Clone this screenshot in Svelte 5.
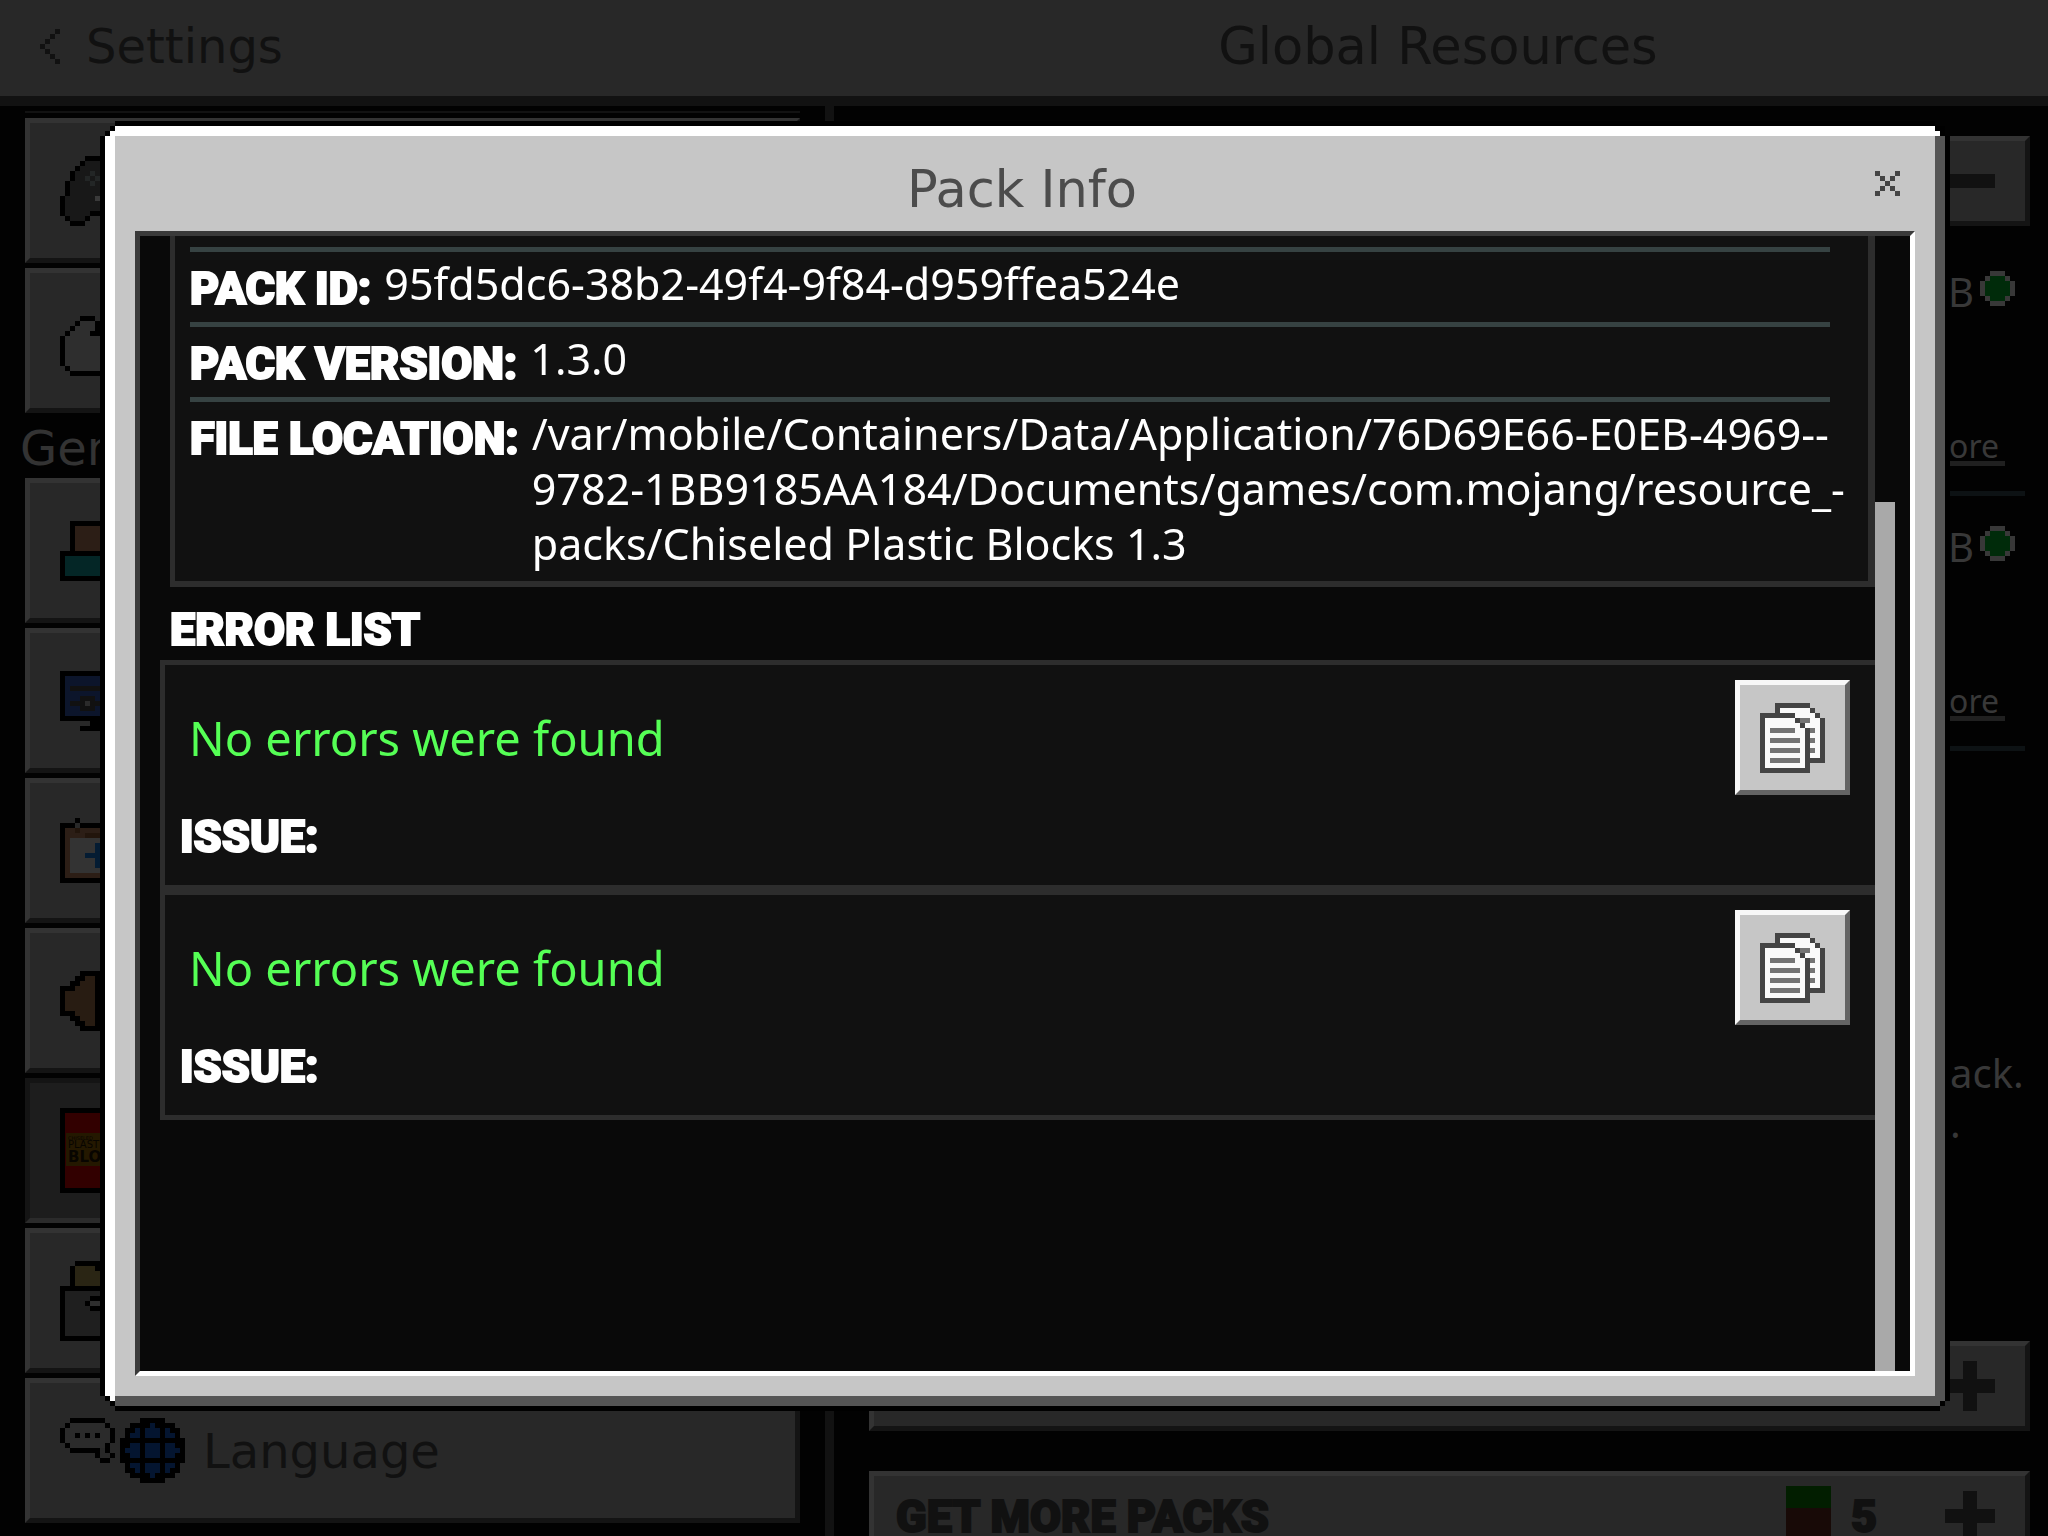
<script lang="ts">
	type Shape = { fill: string; d: string };
	type Icon = { width: number; height: number; shapes: Shape[] };

	// every icon is drawn on a grid of 5px cells
	const CELL = 5;

	const controller: Icon = {
		width: 8,
		height: 14,
		shapes: [
			{ fill: '#181818', d: 'M5 1h3v10h-2v1h-1v1h-3v-1h-1v-4h0v-3h1v-2h1v-1h1v-1h1z' },
			{ fill: '#000', d: 'M5 0h3v1h-3zM4 1h1v1h-1zM3 2h1v1h-1zM2 3h1v2h-1zM1 5h1v3h-1zM0 8h1v4h-1zM6 11h2v1h-2zM1 12h1v1h-1zM5 12h1v1h-1zM2 13h3v1h-3z' },
			{ fill: '#232626', d: 'M6 3h1v1h-1zM5 4h1v1h-1zM7 4h1v1h-1zM6 5h1v1h-1z' },
			{ fill: '#3a3a3a', d: 'M7 8h1v1h-1z' }
		]
	};

	const touch: Icon = {
		width: 8,
		height: 14,
		shapes: [
			{ fill: '#2e2e2e', d: 'M4 3h3v2h1v8h-6v-1h-1v-6h1v-1h1v-1h1z' },
			{ fill: '#000', d: 'M4 2h3v1h-3zM3 3h1v1h-1zM7 3h1v3h-2v-1h1zM2 4h1v1h-1zM1 5h1v1h-1zM0 6h1v6h-1zM1 12h1v1h-1zM2 13h6v1h-6z' }
		]
	};

	const profile: Icon = {
		width: 8,
		height: 12,
		shapes: [
			{ fill: '#000', d: 'M2 0h6v12h-8v-6h2z' },
			{ fill: '#2c1e16', d: 'M3 1h5v5h-5z' },
			{ fill: '#042626', d: 'M1 7h7v4h-7z' }
		]
	};

	const video: Icon = {
		width: 8,
		height: 12,
		shapes: [
			{ fill: '#000', d: 'M0 0h8v12h-4v-1h2v-1h-6z' },
			{ fill: '#0c152b', d: 'M1 1h7v8h-7z' },
			{ fill: '#111', d: 'M2 3h6v1h-6zM2 6h6v1h-6zM4 5h3v3h-3z' },
			{ fill: '#2b2b2b', d: 'M5 6h1v1h-1z' }
		]
	};

	const creator: Icon = {
		width: 8,
		height: 13,
		shapes: [
			{ fill: '#000', d: 'M3 0h1v1h4v12h-8v-12h3z' },
			{ fill: '#2c1e16', d: 'M1 2h7v10h-7z' },
			{ fill: '#282828', d: 'M0 0h3v1h-3zM3 1h1v1h-1z' },
			{ fill: '#22150c', d: 'M3 2h1v1h-1zM5 3h3v1h-3z' },
			{ fill: '#333', d: 'M2 4h6v7h-6z' },
			{ fill: '#041c33', d: 'M7 5h1v5h-1v-2h-2v-1h2z' }
		]
	};

	const audio: Icon = {
		width: 8,
		height: 12,
		shapes: [
			{ fill: '#000', d: 'M4 0h4v12h-4v-1h-1v-1h-1v-1h-2v-6h2v-1h1v-1h1z' },
			{ fill: '#281c12', d: 'M5 1h2v10h-2v-1h-1v-1h-1v-1h-2v-4h2v-1h1v-1h1z' }
		]
	};

	const storage: Icon = {
		width: 8,
		height: 16,
		shapes: [
			{ fill: '#000', d: 'M3 0h5v16h-8v-11h2v-4h1z' },
			{ fill: '#2a2514', d: 'M3 1h4v1h1v3h-5z' },
			{ fill: '#1f1f1f', d: 'M1 6h7v9h-7z' },
			{ fill: '#000', d: 'M6 7h2v1h-2zM5 8h1v1h-1zM6 9h2v1h-2z' },
			{ fill: '#2e2e2e', d: 'M6 8h2v1h-2z' }
		]
	};

	const language: Icon = {
		width: 25,
		height: 13,
		shapes: [
			{ fill: '#2b2b2b', d: 'M2 1h7v1h1v3h-1v1h-7v-1h-1v-3h1z' },
			{ fill: '#000', d: 'M2 0h7v1h-7zM1 1h1v1h-1zM9 1h1v1h-1zM0 2h1v3h-1zM10 2h1v3h-1zM1 5h1v1h-1zM9 5h1v2h-1zM2 6h6v2h-1v-1h-5zM10 7h1v1h-1zM8 8h2v1h-2zM3 3h1v1h-1zM5 3h1v1h-1zM7 3h1v1h-1z' },
			{ fill: '#000', d: 'M16 0h5v1h2v1h1v2h1v5h-1v2h-1v1h-2v1h-5v-1h-2v-1h-1v-2h-1v-5h1v-2h1v-1h2z' },
			{ fill: '#041530', d: 'M18 1h1v1h-1zM15 2h1v2h-2v-1h1zM17 2h3v2h-3zM21 2h1v1h1v1h-2zM14 5h2v3h-2v-1h-1v-1h1zM17 5h3v3h-3zM21 5h2v1h1v1h-1v1h-2zM14 9h2v2h-1v-1h-1zM17 9h3v2h-3zM21 9h2v1h-1v1h-1zM18 11h1v1h-1z' }
		]
	};

	const copy: Icon = {
		width: 13,
		height: 14,
		shapes: [
			{ fill: '#444', d: 'M3 0h7v1h1v1h1v1h1v9h-3v2h-10v-12h3z' },
			{ fill: '#fafafa', d: 'M4 1h6v1h1v1h1v8h-2v-7h-1v-1h-2v-1h-3zM1 3h6v1h1v1h1v8h-8z' },
			{ fill: '#444', d: 'M7 3h1v1h-1zM8 4h1v1h-1zM9 5h1v6h-1z' },
			{ fill: '#fafafa', d: 'M9 4h1v1h-1z' },
			{ fill: '#747474', d: 'M8 3h2v1h-2zM2 5h5v1h-5zM2 7h6v1h-6zM2 9h6v1h-6zM2 11h6v1h-6zM10 5h1v1h-1zM10 7h1v1h-1zM10 9h1v1h-1z' }
		]
	};

	const topItems = [
		{ id: 'controller', icon: controller },
		{ id: 'touch', icon: touch }
	];

	const generalItems = [
		{ id: 'profile', icon: profile },
		{ id: 'video', icon: video },
		{ id: 'creator', icon: creator },
		{ id: 'audio', icon: audio },
		{ id: 'resources', icon: null },
		{ id: 'storage', icon: storage }
	];

	const details = [
		{ label: 'PACK ID:', lines: ['95fd5dc6-38b2-49f4-9f84-d959ffea524e'] },
		{ label: 'PACK VERSION:', lines: ['1.3.0'] },
		{
			label: 'FILE LOCATION:',
			lines: [
				'/var/mobile/Containers/Data/Application/76D69E66-E0EB-4969--',
				'9782-1BB9185AA184/Documents/games/com.mojang/resource_-',
				'packs/Chiseled Plastic Blocks 1.3'
			]
		}
	];

	const errors = ['No errors were found', 'No errors were found'];

	let open = $state(true);
</script>

{#snippet pixelIcon(icon: Icon)}
	<svg
		width={icon.width * CELL}
		height={icon.height * CELL}
		viewBox="0 0 {icon.width} {icon.height}"
		shape-rendering="crispEdges"
		aria-hidden="true"
	>
		{#each icon.shapes as shape}
			<path fill={shape.fill} d={shape.d} />
		{/each}
	</svg>
{/snippet}

{#snippet plusIcon()}
	<svg width="50" height="50" viewBox="0 0 50 50" aria-hidden="true">
		<path fill="#111" d="M18 0h14v18h18v14h-18v18h-14v-18h-18v-14h18z" />
	</svg>
{/snippet}

<div class="screen">
	<header class="topbar">
		<button class="back">
			<svg width="20" height="35" viewBox="0 0 4 7" preserveAspectRatio="none" shape-rendering="crispEdges" aria-hidden="true">
				<path fill="#111" d="M3 0h1v1h-1zM2 1h1v1h-1zM1 2h1v1h-1zM0 3h1v1h-1zM1 4h1v1h-1zM2 5h1v1h-1zM3 6h1v1h-1z" />
			</svg>
			Settings
		</button>
		<h1>Global Resources</h1>
	</header>

	<div class="body">
		<nav class="sidebar">
			<div class="stub"></div>
			{#each topItems as item (item.id)}
				<button class="tile" aria-label={item.id}>{@render pixelIcon(item.icon)}</button>
			{/each}
			<h2>General</h2>
			{#each generalItems as item (item.id)}
				<button class="tile" class:selected={!item.icon} aria-label={item.id}>
					{#if item.icon}
						{@render pixelIcon(item.icon)}
					{:else}
						<svg class="pack-art" width="85" height="85" viewBox="0 0 85 85">
							<rect width="85" height="85" fill="#000" />
							<rect x="5" y="5" width="75" height="75" fill="#320000" />
							<rect x="6" y="25" width="73" height="33" fill="#241800" />
							<text x="8" y="32" font-size="5">CHISELED</text>
							<text x="8" y="40" font-size="10">PLASTIC</text>
							<text x="8" y="54" font-size="15" font-weight="bold">BLOCKS</text>
						</svg>
					{/if}
				</button>
			{/each}
			<button class="tile">
				{@render pixelIcon(language)}
				Language
			</button>
		</nav>

		<div class="divider"></div>

		<main class="content">
			<button class="fold" aria-label="Active">
				<svg width="50" height="50" viewBox="0 0 50 50" aria-hidden="true">
					<path fill="#111" d="M0 18h50v14h-50z" />
				</svg>
			</button>
			{#each [1, 2] as entry (entry)}
				<section class="entry">
					<div class="memory">
						<span>B</span>
						<svg width="35" height="35" viewBox="0 0 7 7" shape-rendering="crispEdges" aria-hidden="true">
							<path fill="#383838" d="M2 0h3v1h1v1h1v3h-1v1h-1v1h-3v-1h-1v-1h-1v-3h1v-1h1z" />
							<path fill="#002b0a" d="M2 1h3v1h1v3h-1v1h-3v-1h-1v-3h1z" />
						</svg>
					</div>
					<a href="#more">ore</a>
				</section>
			{/each}
			<p>ack.<br />.</p>
			<button class="fold" aria-label="Available">{@render plusIcon()}</button>
			<button class="fold">
				<span class="name">GET MORE PACKS</span>
				<svg width="45" height="60" viewBox="0 0 45 60" aria-hidden="true">
					<rect width="45" height="60" fill="#180a07" />
					<rect width="45" height="22" fill="#021e00" />
				</svg>
				<span class="count">5</span>
				{@render plusIcon()}
			</button>
		</main>
	</div>
</div>

{#if open}
	<div class="overlay">
		<div class="frame" role="dialog" aria-labelledby="dialog-title">
			<div class="window">
				<div class="titlebar">
					<h2 id="dialog-title">Pack Info</h2>
					<button class="close" aria-label="Close" onclick={() => (open = false)}>
						<svg width="25" height="25" viewBox="0 0 5 5" shape-rendering="crispEdges" aria-hidden="true">
							<path fill="#444" d="M0 0h1v1h-1zM4 0h1v1h-1zM1 1h1v1h-1zM3 1h1v1h-1zM2 2h1v1h-1zM1 3h1v1h-1zM3 3h1v1h-1zM0 4h1v1h-1zM4 4h1v1h-1z" />
						</svg>
					</button>
				</div>

				<div class="panel">
					<div class="scroll">
						<dl class="details">
							{#each details as row (row.label)}
								<div class="detail">
									<dt>{row.label}</dt>
									<dd>
										{#each row.lines as line}
											<div>{line}</div>
										{/each}
									</dd>
								</div>
							{/each}
						</dl>

						<h3>ERROR LIST</h3>
						<ul>
							{#each errors as message}
								<li>
									<div class="result">
										<span>{message}</span>
										<button class="copy" aria-label="Copy">{@render pixelIcon(copy)}</button>
									</div>
									<h4>ISSUE:</h4>
								</li>
							{/each}
						</ul>
					</div>
					<div class="track">
						<div class="thumb"></div>
					</div>
				</div>
			</div>
		</div>
	</div>
{/if}

<style>
	:global(body) {
		background: #020202;
		overflow: hidden;
	}

	h1,
	h2,
	h3,
	h4,
	p,
	dl,
	dd,
	ul {
		margin: 0;
		padding: 0;
		font-weight: normal;
	}

	ul {
		list-style: none;
	}

	button {
		margin: 0;
		padding: 0;
		border: 0;
		background: none;
		color: inherit;
		font: inherit;
		text-align: left;
		cursor: pointer;
	}

	svg {
		display: block;
		flex: none;
	}

	.screen,
	.overlay {
		font-family: 'DejaVu Sans', sans-serif;
		font-size: 48px;
	}

	.screen {
		display: flex;
		flex-direction: column;
		height: 100vh;
		overflow: hidden;
		color: #111;
	}

	/* --- Top bar --- */
	.topbar {
		display: grid;
		grid-template-columns: 834fr 1214fr;
		flex: none;
		align-items: center;
		box-sizing: border-box;
		height: 106px;
		padding-bottom: 4px;
		background: #282828;
		border-bottom: 10px solid #121212;
	}

	.back {
		display: flex;
		align-items: center;
		gap: 26px;
		padding-left: 40px;
	}

	h1 {
		padding-right: 6px;
		font-size: 51px;
		text-align: center;
	}

	/* --- Settings list --- */
	.body {
		display: grid;
		grid-template-columns: 825fr 9px 1214fr;
		flex: 1;
		min-height: 0;
		overflow: hidden;
	}

	.sidebar {
		display: flex;
		flex-direction: column;
		gap: 5px;
		padding: 5px 20px 0;
	}

	.stub {
		flex: none;
		height: 2px;
		margin: 0 5px;
		background: #121212;
	}

	.sidebar h2 {
		flex: none;
		height: 55px;
		color: #333;
		font-size: 48px;
		line-height: 60px;
	}

	.tile {
		display: flex;
		flex: none;
		align-items: center;
		gap: 18px;
		box-sizing: border-box;
		height: 145px;
		margin: 0 5px;
		padding-left: 30px;
		background: #282828;
		border: 5px solid #141414;
		border-top-color: #333;
		border-left-color: #333;
	}

	.selected {
		background: #1d1d1d;
		border-color: #141414;
		border-bottom-color: #2b2b2b;
	}

	.pack-art {
		font-family: 'DejaVu Sans', sans-serif;
		fill: #080500;
	}

	.divider {
		background: #121212;
	}

	/* --- Pack list --- */
	.content {
		padding: 30px 18px 0 35px;
	}

	.fold {
		display: flex;
		align-items: center;
		justify-content: flex-end;
		box-sizing: border-box;
		width: 100%;
		height: 90px;
		margin-bottom: 40px;
		padding: 0 30px 0 22px;
		background: #282828;
		border: 5px solid #141414;
		border-top-color: #333;
		border-left-color: #333;
	}

	.fold .name {
		margin-right: auto;
	}

	.fold .count {
		margin: 0 68px 0 20px;
	}

	.fold:first-child {
		margin-bottom: 15px;
	}

	.entry {
		display: flex;
		flex-direction: column;
		align-items: flex-end;
		box-sizing: border-box;
		height: 255px;
		margin-right: 5px;
		padding: 30px 10px 0 0;
		border-bottom: 5px solid #0d1214;
		color: #383838;
		font-family: 'Noto Sans', sans-serif;
		font-size: 40px;
	}

	.memory {
		display: flex;
		align-items: center;
		gap: 6px;
		height: 35px;
		margin-bottom: 125px;
	}

	.memory span {
		padding-top: 5px;
	}

	.entry a {
		margin-right: 10px;
		padding: 0 6px 0 20px;
		border-bottom: 5px solid #202020;
		color: inherit;
		font-size: 32px;
		line-height: 30px;
		text-decoration: none;
	}

	.content p {
		width: 75px;
		margin: 297px 5px 193px auto;
		color: #383838;
		font-family: 'Noto Sans', sans-serif;
		font-size: 40px;
		line-height: 50px;
	}

	/* --- Dialog --- */
	.overlay {
		position: fixed;
		inset: 0;
		display: flex;
		padding: 121px 98px 125px 100px;
	}

	.frame {
		display: flex;
		flex: 1;
		padding: 5px;
		background: #000;
		clip-path: polygon(
			0 15px, 5px 15px, 5px 10px, 10px 10px, 10px 5px, 15px 5px, 15px 0,
			calc(100% - 15px) 0, calc(100% - 15px) 5px, calc(100% - 5px) 5px, calc(100% - 5px) 15px, 100% 15px,
			100% calc(100% - 10px), calc(100% - 5px) calc(100% - 10px), calc(100% - 5px) calc(100% - 5px), calc(100% - 10px) calc(100% - 5px), calc(100% - 10px) 100%,
			15px 100%, 15px calc(100% - 5px), 10px calc(100% - 5px), 10px calc(100% - 10px), 5px calc(100% - 10px), 5px calc(100% - 15px), 0 calc(100% - 15px)
		);
	}

	.window {
		display: flex;
		flex: 1;
		flex-direction: column;
		padding: 10px 30px 30px;
		background: #c6c6c6;
		box-shadow:
			inset 10px 10px 0 #fff,
			inset -10px -10px 0 #555;
		clip-path: polygon(
			0 10px, 5px 10px, 5px 5px, 10px 5px, 10px 0,
			calc(100% - 10px) 0, calc(100% - 10px) 5px, calc(100% - 5px) 5px, calc(100% - 5px) 10px, 100% 10px,
			100% calc(100% - 5px), calc(100% - 5px) calc(100% - 5px), calc(100% - 5px) 100%,
			10px 100%, 10px calc(100% - 5px), 5px calc(100% - 5px), 5px calc(100% - 10px), 0 calc(100% - 10px)
		);
	}

	.titlebar {
		display: grid;
		grid-template-columns: 1fr auto 1fr;
		flex: none;
		align-items: center;
		height: 95px;
	}

	.titlebar h2 {
		grid-column: 2;
		padding: 12px 6px 0 0;
		color: #4c4c4c;
		font-size: 51px;
	}

	.close {
		justify-self: end;
		margin-right: 15px;
	}

	.panel {
		display: grid;
		grid-template-columns: 1fr 35px;
		flex: 1;
		min-height: 0;
		background: #090909;
		border: 5px solid #3a3a3a;
		border-right-color: #fff;
		border-bottom-color: #fff;
	}

	.scroll {
		overflow: hidden;
		color: #fff;
	}

	.track {
		display: grid;
		grid-template-rows: 266fr 869fr;
	}

	.thumb {
		grid-row: 2;
		width: 20px;
		background: #a9a9a9;
	}

	dt,
	h3,
	h4,
	.name,
	.count {
		font-family: 'Roboto', sans-serif;
		font-size: 45px;
		font-weight: 900;
		-webkit-text-stroke: 2px currentColor;
	}

	.details {
		margin-left: 30px;
		padding: 11px 38px 10px 15px;
		background: #111;
		border: solid #2d2d2d;
		border-width: 0 7px 6px 5px;
	}

	.detail {
		display: flex;
		align-items: flex-start;
		gap: 13px;
		padding-top: 4px;
		border-top: 5px solid #364242;
		white-space: nowrap;
	}

	dt {
		line-height: 66px;
	}

	dd {
		font-family: 'Noto Sans', sans-serif;
		font-size: 43px;
		line-height: 55px;
	}

	h3 {
		padding: 13px 0 0 30px;
		line-height: 60px;
	}

	li {
		box-sizing: border-box;
		height: 230px;
		margin-left: 20px;
		padding-top: 15px;
		background: #111;
		border: solid #2d2d2d;
		border-width: 5px 0 5px 5px;
	}

	.result {
		display: flex;
		align-items: center;
		justify-content: space-between;
		padding: 0 25px 0 24px;
		color: #55ff55;
		font-family: 'Noto Sans', sans-serif;
		font-size: 47px;
	}

	.copy {
		display: grid;
		place-items: center;
		box-sizing: border-box;
		width: 115px;
		height: 115px;
		background: #c6c6c6;
		border: 5px solid #f7f7f7;
		border-right-color: #646464;
		border-bottom-color: #646464;
	}

	h4 {
		padding: 12px 0 0 15px;
		line-height: 60px;
	}
</style>
